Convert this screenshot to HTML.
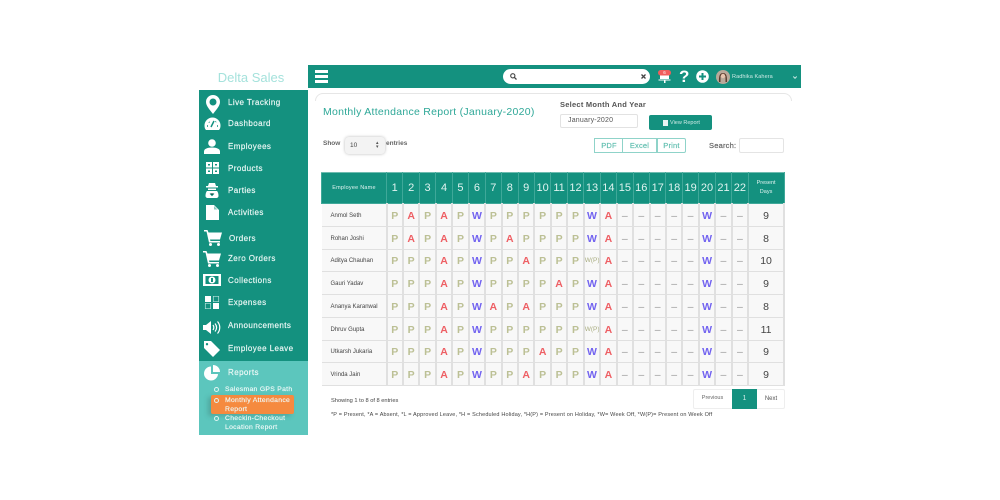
<!DOCTYPE html>
<html><head><meta charset="utf-8">
<style>
html,body{margin:0;padding:0;background:#fff;width:1000px;height:500px;overflow:hidden;font-family:"Liberation Sans",sans-serif}
#w{position:absolute;left:0;top:0;width:1000px;height:500px;background:#fff;filter:blur(.3px)}
.a{position:absolute;white-space:nowrap}
.side{left:199px;top:90px;width:109px;height:271px;background:#14917f}
.side2{left:199px;top:361px;width:109px;height:74px;background:#5cc6bd}
.nav{left:228px;font-size:8px;color:#eef9f7;letter-spacing:.42px;line-height:10px;-webkit-text-stroke:.15px #eef9f7}
.sub{left:225px;font-size:6.800px;color:#f0faf8;line-height:9.500px;letter-spacing:.3px;-webkit-text-stroke:.15px #f0faf8}
.dot{width:3px;height:3px;border:1px solid #dff5f2;border-radius:50%;left:214px}
svg{position:absolute;overflow:visible}
table{position:absolute;left:321px;top:172px;border-collapse:collapse;table-layout:fixed;width:464px}
th{background:#14917f;color:#e0f3f0;font-size:11px;font-weight:normal;height:30px;padding:0;border:1px solid #3fa899;border-top:1px solid #6fbcb0}
th.s{font-size:5.500px;line-height:9px}
tr{height:23px}
tr:nth-child(4),tr:nth-child(8){height:22px}
td{box-sizing:border-box;background:#f8f8f8;border:1px solid #e0e0e0;border-width:1px 2px 1px 1px;padding:1px 0 0;text-align:center;font-weight:bold;font-size:10.500px;line-height:14px}
td.n{font-size:6px;font-weight:normal;color:#444;text-align:left;padding-left:9px;border-left:0;white-space:nowrap}
.p{color:#bcc095}.x{color:#ee5f64}.w{color:#7263f0}.d{color:#999;font-weight:normal}
.wp{color:#a9ad80;font-weight:normal;font-size:6.500px}
td.t{font-weight:normal;font-size:10.500px;color:#444}
.btn{top:138px;height:13px;border:1px solid #8fd3c9;background:#fff;color:#5dbdae;font-size:7.500px;line-height:13px;text-align:center;letter-spacing:.2px;-webkit-text-stroke:.15px #5dbdae}
</style></head><body><div id="w">

<div class="a" style="left:199px;top:70px;width:104px;text-align:center;font-size:13px;color:#a5e2dc">Delta Sales</div>
<div class="a side"></div><div class="a side2"></div>

<svg style="left:205px;top:95px" width="16" height="19" viewBox="0 0 16 19"><path fill="#fff" fill-rule="evenodd" d="M8 0a7 7 0 0 0-7 7c0 4 4 8 7 12 3-4 7-8 7-12a7 7 0 0 0-7-7zm0 3.500a3.500 3.500 0 1 1 0 7 3.500 3.500 0 0 1 0-7z"/></svg>
<div class="a nav" style="top:97.500px">Live Tracking</div>

<svg style="left:204px;top:117px" width="17" height="14" viewBox="0 0 17 14"><path fill="#fff" d="M8.500 0.500a8 8 0 0 0-8 8c0 2 .5 3.500 1.500 4.500h13c1-1 1.500-2.500 1.500-4.500a8 8 0 0 0-8-8z"/><path stroke="#14917f" stroke-width="1.500" d="M7 10l3-6M3 9h1M13 9h1M5 5l.5.5M12 4.500l-.5.5"/></svg>
<div class="a nav" style="top:119px">Dashboard</div>

<svg style="left:204px;top:139px" width="16" height="15" viewBox="0 0 16 15"><circle cx="8" cy="4" r="3.800" fill="#fff"/><path fill="#fff" d="M0 15v-2.500C0 10 3 8.500 8 8.500s8 1.500 8 4V15z"/></svg>
<div class="a nav" style="top:141.500px">Employees</div>

<svg style="left:206px;top:162px" width="13" height="12" viewBox="0 0 13 12"><path fill="#fff" d="M0 0h6v5.500H0zM7 0h6v5.500H7zM0 6.500h6V12H0zM7 6.500h6V12H7z"/><path fill="#14917f" d="M2 2h2v1.500H2zM9 2h2v1.500H9zM2 8.500h2V10H2zM9 8.500h2V10H9z"/></svg>
<div class="a nav" style="top:163.500px">Products</div>

<svg style="left:205px;top:183px" width="14" height="15" viewBox="0 0 14 15"><path fill="#fff" d="M4 0h6l1 3h2v1.500H1V3h2zM3 5.500h8v1.500H3zM2 8h10c1 1 1.500 3 1.500 5 0 1-1 2-2 2h-9c-1 0-2-1-2-2 0-2 .5-4 1.500-5z"/><path stroke="#14917f" d="M5 10.500l2 2 2-2"/></svg>
<div class="a nav" style="top:185.500px">Parties</div>

<svg style="left:206px;top:205px" width="13" height="15" viewBox="0 0 13 15"><path fill="#fff" d="M0 0h8l5 5v10H0z"/><path fill="#14917f" d="M8 1v3.500h3.500z" opacity=".5"/></svg>
<div class="a nav" style="top:207.500px">Activities</div>

<svg style="left:204px;top:230px" width="18" height="16" viewBox="0 0 18 16"><path fill="#fff" d="M0 0h3.500l1 2.500H18l-2 7H6l.4 1.500H16v1.500H5L2.500 1.500H0z"/><circle cx="6.500" cy="14.500" r="1.500" fill="#fff"/><circle cx="14.500" cy="14.500" r="1.500" fill="#fff"/></svg>
<div class="a nav" style="top:233.500px;left:229px">Orders</div>

<svg style="left:203px;top:251px" width="18" height="16" viewBox="0 0 18 16"><path fill="#fff" d="M0 0h3.500l1 2.500H18l-2 7H6l.4 1.500H16v1.500H5L2.500 1.500H0z"/><circle cx="6.500" cy="14.500" r="1.500" fill="#fff"/><circle cx="14.500" cy="14.500" r="1.500" fill="#fff"/></svg>
<div class="a nav" style="top:253.500px">Zero Orders</div>

<svg style="left:203px;top:274px" width="18" height="12" viewBox="0 0 18 12"><path fill="#fff" fill-rule="evenodd" d="M0 0h18v12H0zM2.500 2v8h13V2z"/><circle cx="9" cy="6" r="3.500" fill="#fff"/><path fill="#14917f" d="M8 4h2v4H8z"/></svg>
<div class="a nav" style="top:275.500px">Collections</div>

<svg style="left:205px;top:296px" width="14" height="13" viewBox="0 0 14 13"><path fill="#fff" d="M0 0h6v6H0zM8 7h6v6H8z"/><path fill="none" stroke="#b9e4de" stroke-width=".7" d="M8.300.3h5.400v5.400H8.300zM.3 7.300h5.400v5.400H.3z"/></svg>
<div class="a nav" style="top:297.500px">Expenses</div>

<svg style="left:203px;top:320px" width="18" height="15" viewBox="0 0 18 15"><path fill="#fff" d="M0 5h3l5-4v13L3 10H0z"/><path fill="none" stroke="#fff" stroke-width="1.200" d="M10 5c1 1.500 1 3.500 0 5M12 3.500c2 2.500 2 5.500 0 8M14.500 1.500c3 3.500 3 8.500 0 12"/></svg>
<div class="a nav" style="top:320.500px">Announcements</div>

<svg style="left:204px;top:341px" width="16" height="16" viewBox="0 0 16 16"><path fill="#fff" fill-rule="evenodd" d="M0 0h7l9 9-7 7-9-9zm3 2a1.200 1.200 0 1 0 0 2.400A1.200 1.200 0 0 0 3 2z"/></svg>
<div class="a nav" style="top:343.500px">Employee Leave</div>

<svg style="left:204px;top:365px" width="16" height="16" viewBox="0 0 16 16"><path fill="#fff" d="M7 1.500A7 7 0 1 0 14 9H7zM9 0v7h7a7 7 0 0 0-7-7z"/></svg>
<div class="a nav" style="top:367.500px">Reports</div>

<div class="a" style="left:211px;top:395px;width:83px;height:19px;background:#f58a3f;border-radius:2px;box-shadow:-3px 2px 5px rgba(60,110,100,.35)"></div>
<div class="a dot" style="top:387px"></div>
<div class="a sub" style="top:385px">Salesman GPS Path</div>
<div class="a dot" style="top:398px"></div>
<div class="a sub" style="top:395.500px">Monthly Attendance<br>Report</div>
<div class="a dot" style="top:416px"></div>
<div class="a sub" style="top:413.500px">Checkin-Checkout<br>Location Report</div>

<!-- top bar -->
<div class="a" style="left:308px;top:65px;width:493px;height:23px;background:#14917f"></div>
<div class="a" style="left:315px;top:70px;width:13px;height:2.500px;background:#fff"></div>
<div class="a" style="left:315px;top:75px;width:13px;height:2.500px;background:#fff"></div>
<div class="a" style="left:315px;top:80px;width:13px;height:2.500px;background:#fff"></div>
<div class="a" style="left:503px;top:69px;width:147px;height:15px;background:#fff;border-radius:8px"></div>
<svg style="left:510px;top:73px" width="7" height="7" viewBox="0 0 7 7"><circle cx="2.800" cy="2.800" r="2.100" fill="none" stroke="#444" stroke-width="1.100"/><path stroke="#444" stroke-width="1.300" d="M4.300 4.300L6.500 6.500"/></svg>
<svg style="left:641px;top:74px" width="5" height="5" viewBox="0 0 5 5"><path stroke="#444" stroke-width="1.300" d="M.5.500l4 4M4.500.500l-4 4"/></svg>
<svg style="left:657px;top:69px" width="15" height="15" viewBox="0 0 15 15"><path fill="#fff" d="M3 5h9v5H3zM1.500 10.500h12v1h-12zM7 11.500h1.500V14H7z"/><rect x="1" y="1" width="13" height="5.500" rx="2.700" fill="#f25c5c"/></svg>
<div class="a" style="left:657px;top:70px;width:15px;text-align:center;font-size:4.500px;color:#fff;line-height:5px">6</div>
<div class="a" style="left:679px;top:67px;font-size:17px;font-weight:bold;color:#fff;line-height:19px">?</div>
<svg style="left:696px;top:70px" width="13" height="13" viewBox="0 0 13 13"><circle cx="6.500" cy="6.500" r="6.300" fill="#fff"/><path stroke="#14917f" stroke-width="2" d="M6.500 3v7M3 6.500h7"/></svg>
<svg style="left:716px;top:70px" width="14" height="14" viewBox="0 0 14 14"><circle cx="7" cy="7" r="7" fill="#b9a99a"/><path fill="#5a3a2c" d="M3 12c0-3-.5-9 4-9s4 6 4 9H9.500V6h-5v6z"/><circle cx="7" cy="6" r="2.200" fill="#e8c4ae"/></svg>
<div class="a" style="left:732px;top:74px;font-size:5.500px;color:#cfeae6;line-height:6px;letter-spacing:.1px">Radhika Kahera</div>
<svg style="left:793px;top:76px" width="4" height="3" viewBox="0 0 4 3"><path fill="none" stroke="#cfeae6" d="M.3.500L2 2.300 3.700.500"/></svg>

<!-- card -->
<div class="a" style="left:315px;top:93px;width:477px;height:8px;border:1.500px solid #e6e6e6;border-bottom:0;border-radius:8px 8px 0 0;box-sizing:border-box"></div>
<div class="a" style="left:323px;top:105px;font-size:10.500px;color:#2fa898;letter-spacing:.27px;line-height:15px">Monthly Attendance Report (January-2020)</div>
<div class="a" style="left:560px;top:99px;font-size:7.500px;font-weight:bold;color:#555;letter-spacing:.25px;line-height:11px">Select Month And Year</div>
<div class="a" style="left:560px;top:114px;width:78px;height:14px;border:1px solid #e2e2e2;border-radius:2px;box-sizing:border-box;font-size:7px;color:#555;line-height:12px;padding-left:7px;letter-spacing:.2px">January-2020</div>
<div class="a" style="left:649px;top:115px;width:63px;height:15px;background:#14917f;border-radius:2px;color:#cfeae6;font-size:5.500px;line-height:16px;padding-left:21px;box-sizing:border-box">View Report</div>
<div class="a" style="left:663px;top:120px;width:5px;height:6px;background:#e8f5f3"></div>

<div class="a" style="left:323px;top:139px;font-size:6.500px;font-weight:bold;color:#666;line-height:9px">Show</div>
<div class="a" style="left:345px;top:137px;width:40px;height:17px;background:#f3f3f3;border-radius:4px;box-shadow:0 0 3px #bbb;font-size:6.500px;line-height:17px;color:#444;padding-left:5px;box-sizing:border-box">10</div>
<div class="a" style="left:376px;top:141px;font-size:5px;line-height:4px;color:#555">&#9652;<br>&#9662;</div>
<div class="a" style="left:386px;top:139px;font-size:6.500px;font-weight:bold;color:#666;line-height:9px">entries</div>

<div class="a btn" style="left:594px;width:28px">PDF</div>
<div class="a btn" style="left:622px;width:34px;border-left:1px solid #8fd3c9;box-sizing:content-box;width:33px">Excel</div>
<div class="a btn" style="left:657px;width:27px;border-left:1px solid #8fd3c9;border-radius:0 2px 2px 0">Print</div>
<div class="a" style="left:709px;top:140px;font-size:7.500px;color:#666;line-height:11px;letter-spacing:.2px;-webkit-text-stroke:.2px #666">Search:</div>
<div class="a" style="left:739px;top:138px;width:45px;height:15px;border:1px solid #e4e4e4;border-radius:2px;box-sizing:border-box"></div>

<table>
<colgroup><col style="width:65px"><col span="22" style="width:16.450px"><col></colgroup>
<tr><th class="s" style="letter-spacing:.22px">Employee Name</th><th>1</th><th>2</th><th>3</th><th>4</th><th>5</th><th>6</th><th>7</th><th>8</th><th>9</th><th>10</th><th>11</th><th>12</th><th>13</th><th>14</th><th>15</th><th>16</th><th>17</th><th>18</th><th>19</th><th>20</th><th>21</th><th>22</th><th class="s">Present<br>Days</th></tr>
<tr><td class="n">Anmol Seth</td><td class="p">P</td><td class="x">A</td><td class="p">P</td><td class="x">A</td><td class="p">P</td><td class="w">W</td><td class="p">P</td><td class="p">P</td><td class="p">P</td><td class="p">P</td><td class="p">P</td><td class="p">P</td><td class="w">W</td><td class="x">A</td><td class="d">–</td><td class="d">–</td><td class="d">–</td><td class="d">–</td><td class="d">–</td><td class="w">W</td><td class="d">–</td><td class="d">–</td><td class="t">9</td></tr>
<tr><td class="n">Rohan Joshi</td><td class="p">P</td><td class="x">A</td><td class="p">P</td><td class="x">A</td><td class="p">P</td><td class="w">W</td><td class="p">P</td><td class="x">A</td><td class="p">P</td><td class="p">P</td><td class="p">P</td><td class="p">P</td><td class="w">W</td><td class="x">A</td><td class="d">–</td><td class="d">–</td><td class="d">–</td><td class="d">–</td><td class="d">–</td><td class="w">W</td><td class="d">–</td><td class="d">–</td><td class="t">8</td></tr>
<tr><td class="n">Aditya Chauhan</td><td class="p">P</td><td class="p">P</td><td class="p">P</td><td class="x">A</td><td class="p">P</td><td class="w">W</td><td class="p">P</td><td class="p">P</td><td class="x">A</td><td class="p">P</td><td class="p">P</td><td class="p">P</td><td class="wp">W(P)</td><td class="x">A</td><td class="d">–</td><td class="d">–</td><td class="d">–</td><td class="d">–</td><td class="d">–</td><td class="w">W</td><td class="d">–</td><td class="d">–</td><td class="t">10</td></tr>
<tr><td class="n">Gauri Yadav</td><td class="p">P</td><td class="p">P</td><td class="p">P</td><td class="x">A</td><td class="p">P</td><td class="w">W</td><td class="p">P</td><td class="p">P</td><td class="p">P</td><td class="p">P</td><td class="x">A</td><td class="p">P</td><td class="w">W</td><td class="x">A</td><td class="d">–</td><td class="d">–</td><td class="d">–</td><td class="d">–</td><td class="d">–</td><td class="w">W</td><td class="d">–</td><td class="d">–</td><td class="t">9</td></tr>
<tr><td class="n">Ananya Karanwal</td><td class="p">P</td><td class="p">P</td><td class="p">P</td><td class="x">A</td><td class="p">P</td><td class="w">W</td><td class="x">A</td><td class="p">P</td><td class="x">A</td><td class="p">P</td><td class="p">P</td><td class="p">P</td><td class="w">W</td><td class="x">A</td><td class="d">–</td><td class="d">–</td><td class="d">–</td><td class="d">–</td><td class="d">–</td><td class="w">W</td><td class="d">–</td><td class="d">–</td><td class="t">8</td></tr>
<tr><td class="n">Dhruv Gupta</td><td class="p">P</td><td class="p">P</td><td class="p">P</td><td class="x">A</td><td class="p">P</td><td class="w">W</td><td class="p">P</td><td class="p">P</td><td class="p">P</td><td class="p">P</td><td class="p">P</td><td class="p">P</td><td class="wp">W(P)</td><td class="x">A</td><td class="d">–</td><td class="d">–</td><td class="d">–</td><td class="d">–</td><td class="d">–</td><td class="w">W</td><td class="d">–</td><td class="d">–</td><td class="t">11</td></tr>
<tr><td class="n">Utkarsh Jukaria</td><td class="p">P</td><td class="p">P</td><td class="p">P</td><td class="x">A</td><td class="p">P</td><td class="w">W</td><td class="p">P</td><td class="p">P</td><td class="p">P</td><td class="x">A</td><td class="p">P</td><td class="p">P</td><td class="w">W</td><td class="x">A</td><td class="d">–</td><td class="d">–</td><td class="d">–</td><td class="d">–</td><td class="d">–</td><td class="w">W</td><td class="d">–</td><td class="d">–</td><td class="t">9</td></tr>
<tr><td class="n">Vrinda Jain</td><td class="p">P</td><td class="p">P</td><td class="p">P</td><td class="x">A</td><td class="p">P</td><td class="w">W</td><td class="p">P</td><td class="p">P</td><td class="x">A</td><td class="p">P</td><td class="p">P</td><td class="p">P</td><td class="w">W</td><td class="x">A</td><td class="d">–</td><td class="d">–</td><td class="d">–</td><td class="d">–</td><td class="d">–</td><td class="w">W</td><td class="d">–</td><td class="d">–</td><td class="t">9</td></tr>
</table>

<div class="a" style="left:331px;top:397px;font-size:5.700px;color:#444;line-height:9px">Showing 1 to 8 of 8 entries</div>
<div class="a" style="left:331px;top:410.500px;font-size:5.500px;color:#444;line-height:9px;letter-spacing:.17px">*P = Present, *A = Absent, *L = Approved Leave, *H = Scheduled Holiday, *H(P) = Present on Holiday, *W= Week Off, *W(P)= Present on Week Off</div>

<div class="a" style="left:693px;top:389px;width:92px;height:20px;border:1px solid #eee;border-radius:2px;box-sizing:border-box"></div>
<div class="a" style="left:693px;top:389px;width:39px;height:20px;text-align:center;font-size:5.500px;line-height:19px;color:#666">Previous</div>
<div class="a" style="left:732px;top:389px;width:25px;height:20px;background:#14917f;text-align:center;font-size:7px;line-height:20px;color:#cfeae6">1</div>
<div class="a" style="left:757px;top:389px;width:28px;height:20px;text-align:center;font-size:6px;line-height:20px;color:#555">Next</div>
</div></body></html>
